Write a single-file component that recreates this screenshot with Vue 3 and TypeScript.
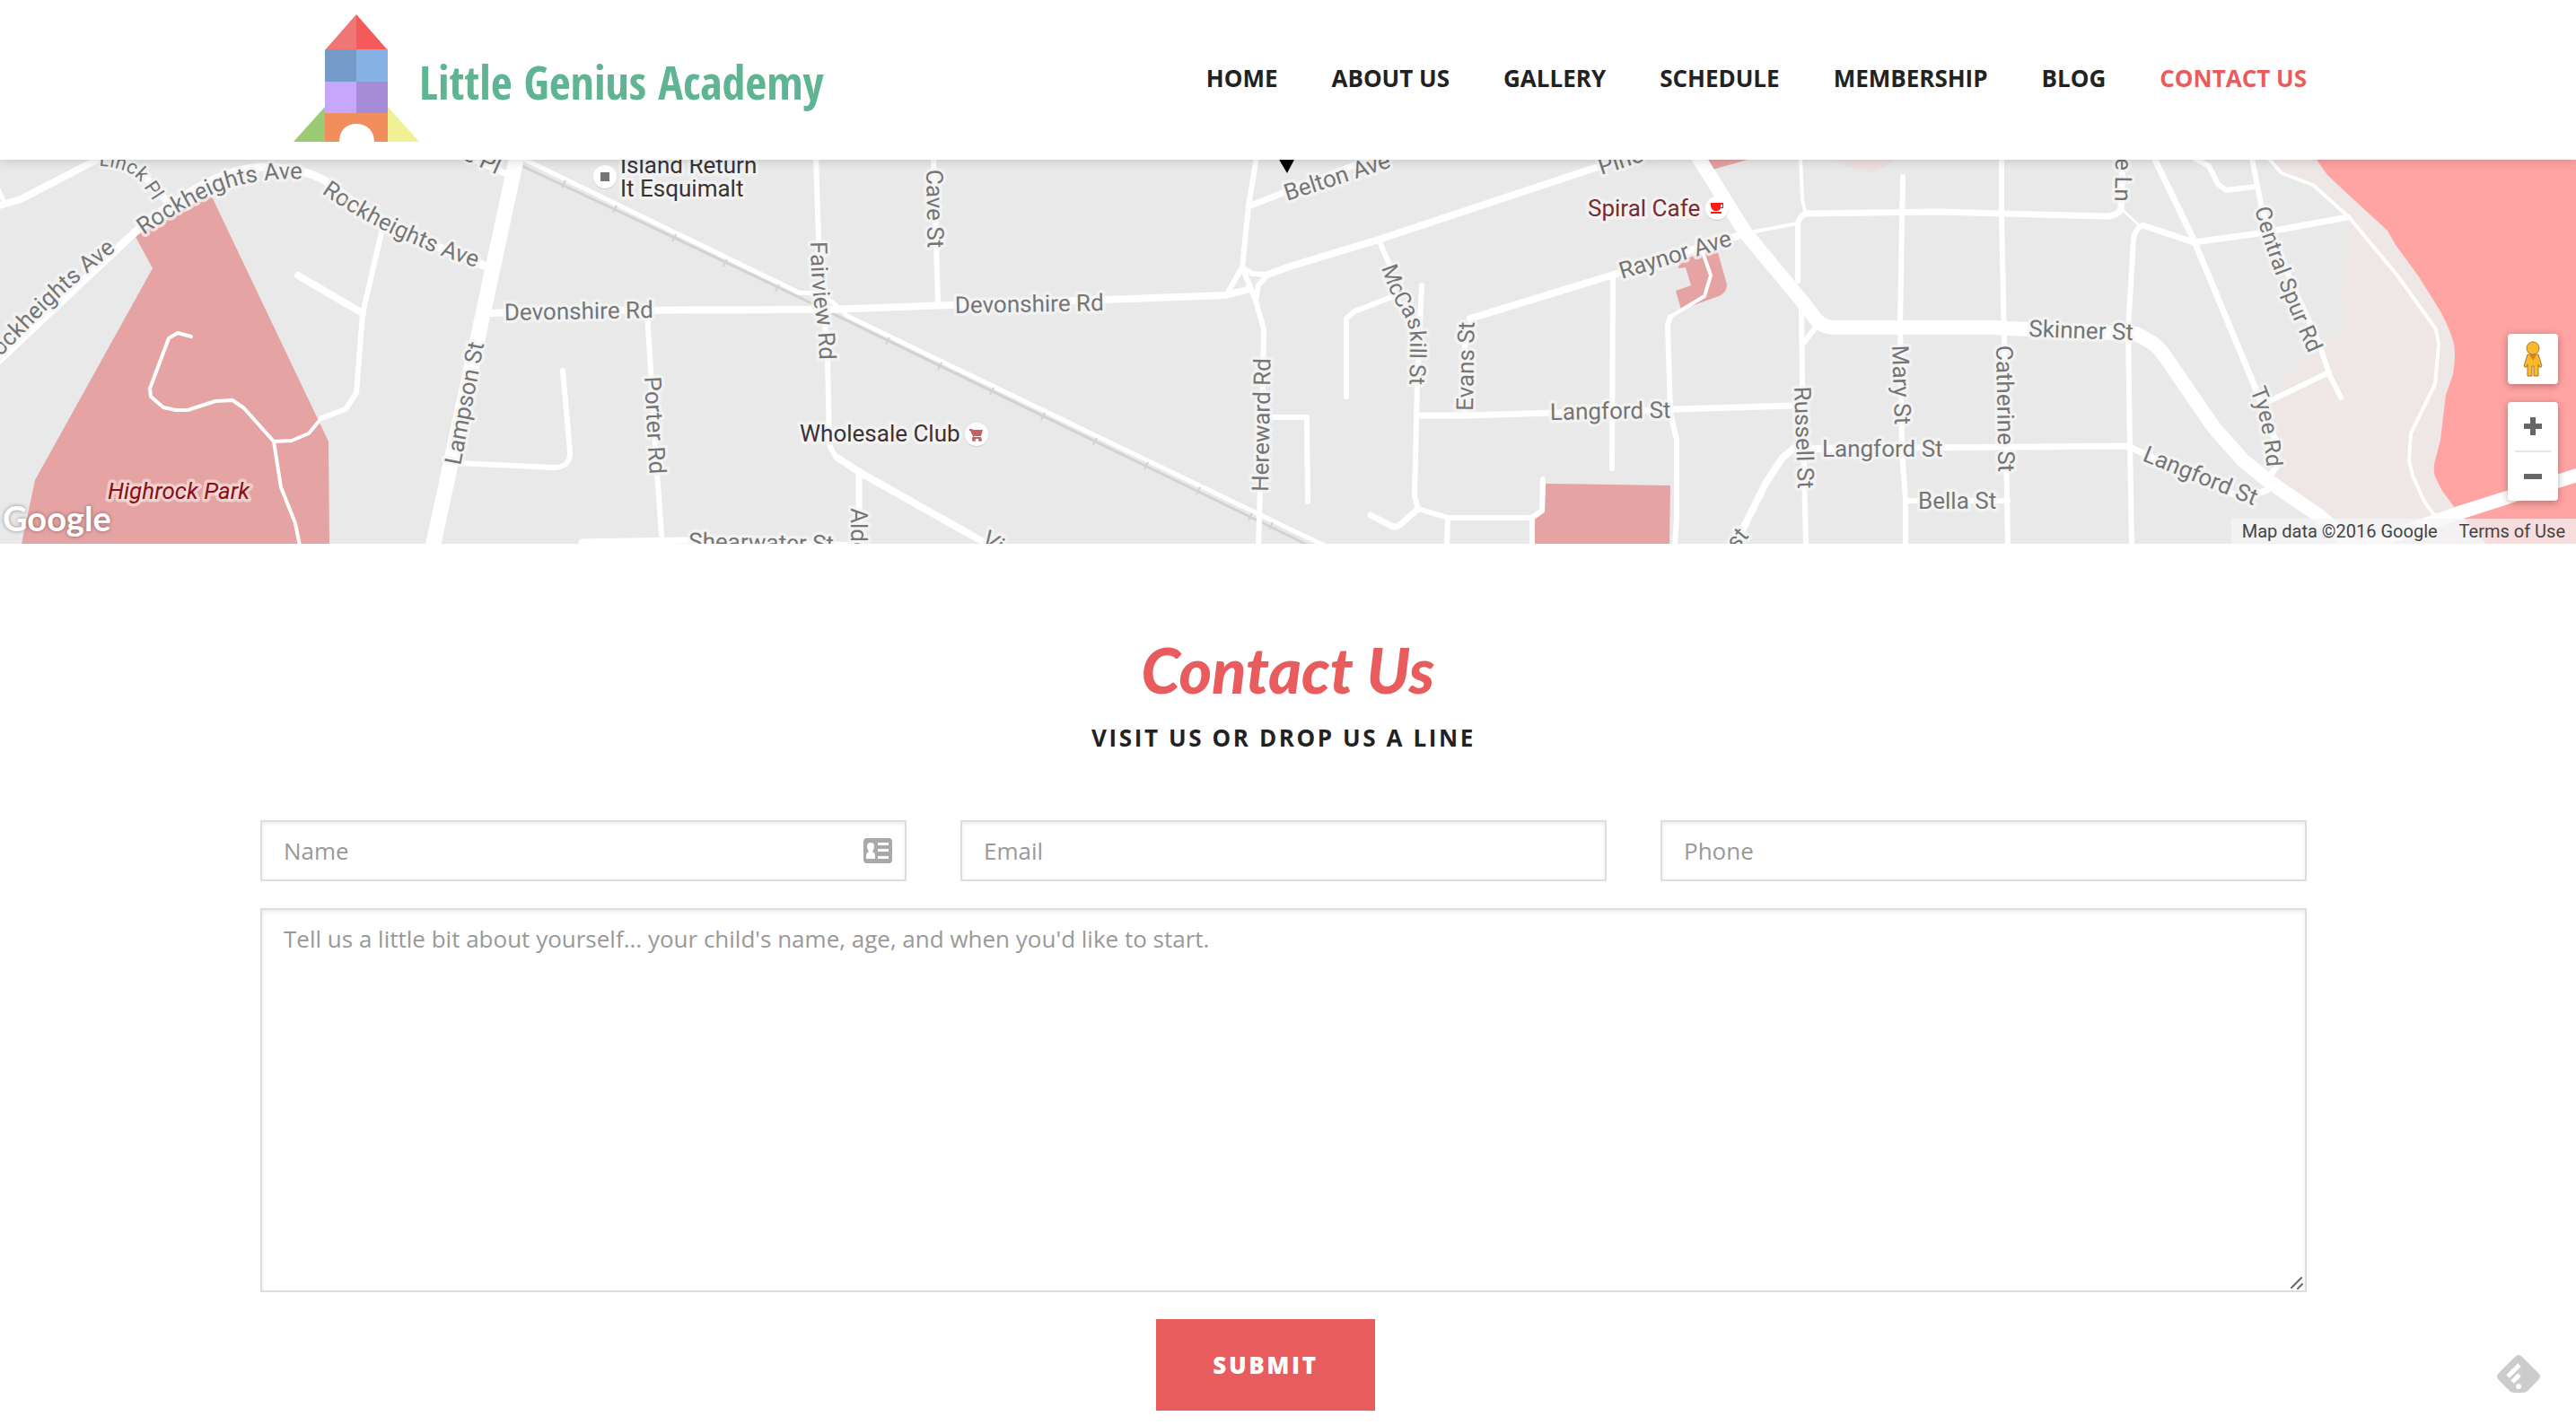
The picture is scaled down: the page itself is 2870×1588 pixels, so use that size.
<script setup lang="ts">
import { ref } from 'vue'

interface NavItem { text: string; active?: boolean }
interface Road { d: string; w: number }
interface Label { text: string; x: number; y: number; r: number; kind?: string }
interface CurvedLabel { id: string; text: string; d: string; kind?: string }

const nav: NavItem[] = [
  { text: 'HOME' },
  { text: 'ABOUT US' },
  { text: 'GALLERY' },
  { text: 'SCHEDULE' },
  { text: 'MEMBERSHIP' },
  { text: 'BLOG' },
  { text: 'CONTACT US', active: true },
]

const parks: string[] = [
  'M150 84 235 39 366 314 367 428H24L39 357 170 121Z',
  'M1722 361 1861 363 1860 428H1709V399L1721 393Z',
  'M1871 112 1913 100 1924 139Q1924 148 1915 152L1873 167 1867 146 1884 140 1878 120 1870 121Z',
  'M1900 0 1908 11 1947 0Z',
]

const roads: Road[] = [
  { w: 8, d: 'M-4 52 23 44 112 -2' },
  { w: 5, d: 'M-4 28 5 48' },
  { w: 9, d: 'M-4 226 150 81Q240 5 300 8 340 10 363 24L427 72 544 120' },
  { w: 8, d: 'M112 -8Q150 0 184 44' },
  { w: 8, d: 'M332 129 404 171' },
  { w: 4, d: 'M213 197 198 193 188 199 167 255 168 264 182 276 196 279 209 279 240 269 259 268 272 277 305 314 325 313 344 305 358 288' },
  { w: 4, d: 'M305 314 313 365 329 405 334 430' },
  { w: 6, d: 'M358 288 385 278 397 260 404 172 427 72' },
  { w: 17, d: 'M576 -4 482 432' },
  { w: 7, d: 'M500 -12 569 18' },
  { w: 8, d: 'M546 171 620 168 900 167 922 167 1366 151 1393 144' },
  { w: 6, d: 'M627 235 635 325Q636 343 617 343L509 338' },
  { w: 7, d: 'M648 426 767 424 960 430' },
  { w: 6, d: 'M721 170 732 349 738 430' },
  { w: 6, d: 'M909 -4 912 89 922 222 924 317Q928 328 933 332L959 349' },
  { w: 8, d: 'M933 332 959 349 1110 434' },
  { w: 6, d: 'M1040 -4 1045 159' },
  { w: 7, d: 'M957 349V432' },
  { w: 6, d: 'M1400 -4 1391 52 1384 120 1399 157 1408 189 1406 300 1402 432' },
  { w: 7, d: 'M1391 52 1550 -10' },
  { w: 6, d: 'M1384 120 1366 151 M1384 120 1395 127 1412 128 1402 140 1399 157' },
  { w: 8, d: 'M1412 128 1440 118 1536 89 1780 8 1830 -10' },
  { w: 6, d: 'M1406 287H1456L1457 381' },
  { w: 6, d: 'M1536 89 1548 117 1553 150 1571 180 1580 200' },
  { w: 6, d: 'M1584 140 1579 250 1576 375 1580 389 1613 399H1707L1718 391 1719 356' },
  { w: 7, d: 'M1580 389 1562 405Q1556 411 1550 408L1527 396' },
  { w: 6, d: 'M1613 399 1612 430M1707 399V430' },
  { w: 6, d: 'M1553 152 1509 169 1500 177V264' },
  { w: 6, d: 'M1632 284V200L1640 176' },
  { w: 8, d: 'M1638 177 1798 128 1880 102 1945 82' },
  { w: 7, d: 'M1580 285H1633L1867 278 1998 274' },
  { w: 6, d: 'M1797 128 1796 344' },
  { w: 4, d: 'M1897 103 1906 129 1899 152 1861 175' },
  { w: 6, d: 'M1861 175 1858 184 1861 282 1868 312V399L1866 430' },
  { w: 16, d: 'M1890 -6 1945 82 2009 159 2024 179Q2032 187 2045 187H2220L2260 189 2380 194 2398 204Q2408 212 2414 222L2467 299 2499 335 2526 357 2584 397 2624 432' },
  { w: 4, d: 'M1950 81 2002 71' },
  { w: 4, d: 'M2006 -2 2008 44 2011 57' },
  { w: 6, d: 'M2003 135V74Q2004 61 2014 60' },
  { w: 7, d: 'M2012 60 2160 58 2230 60 2347 63Q2360 62 2363 55L2365 -2' },
  { w: 6, d: 'M2007 165 2008 252 2012 430' },
  { w: 6, d: 'M2028 180 2009 205' },
  { w: 6, d: 'M2120 19 2117 179 2119 325 2123 379V430' },
  { w: 8, d: 'M2130 321 2010 322 1998 322 1986 332 1968 359 1940 415 1935 430' },
  { w: 7, d: 'M2010 322 2370 319 2500 378 2526 368' },
  { w: 6, d: 'M2123 380H2237' },
  { w: 6, d: 'M2230 -2 2230 59 2233 205 2237 430' },
  { w: 3, d: 'M2364 55 2384 74' },
  { w: 6, d: 'M2387 73Q2378 78 2377 89L2371 189 2373 319 2375 430' },
  { w: 7, d: 'M2387 73 2444 92 2517 82 2616 64' },
  { w: 7, d: 'M2400 -2 2444 89 2513 255 2534 310 2536 342 2526 357' },
  { w: 6, d: 'M2509 -2 2520 55 2550 130 2584 205 2595 239 2608 265' },
  { w: 6, d: 'M2595 237 2526 270' },
  { w: 6, d: 'M2446 -1 2461 7 2471 27 2480 34 2513 30' },
  { w: 4, d: 'M2528 -1 2542 15 2577 28 2617 64 2671 129 2714 189 2717 205 2713 250 2686 305 2684 335 2688 352 2701 381 2715 400' },
  { w: 15, d: 'M2876 350 2738 394 2628 432' },
  { w: 5, d: 'M585 0 890 148 911 149 929 160 944 174 1440 413 1476 430' },
]

const railTicks: [number, number][] = [
  [628, 27], [685, 55], [751, 87], [808, 115], [866, 143], [989, 202], [1047, 230], [1105, 258],
  [1162, 286], [1220, 314], [1277, 341], [1335, 369], [1393, 398], [1416, 408],
]

const labels: Label[] = [
  { text: 'e Pl', x: 514, y: -1, r: 24 },
  { text: 'Lampson St', x: 513, y: 341, r: -79 },
  { text: 'Devonshire Rd', x: 562, y: 179, r: -1 },
  { text: 'Devonshire Rd', x: 1064, y: 171, r: -1 },
  { text: 'Porter Rd', x: 718, y: 242, r: 87 },
  { text: 'Cave St', x: 1032, y: 11, r: 89 },
  { text: 'Shearwater St', x: 767, y: 434, r: 1 },
  { text: 'Alder St', x: 948, y: 388, r: 90 },
  { text: 'Vi', x: 1092, y: 427, r: 33 },
  { text: 'Hereward Rd', x: 1413, y: 370, r: -89 },
  { text: 'Belton Ave', x: 1434, y: 46, r: -18 },
  { text: 'Pine St', x: 1784, y: 17, r: -18 },
  { text: 'Raynor Ave', x: 1807, y: 133, r: -17 },
  { text: 'Evans St', x: 1641, y: 280, r: -89 },
  { text: 'Langford St', x: 1727, y: 290, r: -1 },
  { text: 'Russell St', x: 1999, y: 253, r: 88 },
  { text: 'Mary St', x: 2108, y: 207, r: 88 },
  { text: 'Langford St', x: 2030, y: 331, r: 0 },
  { text: 'Bella St', x: 2137, y: 389, r: 0 },
  { text: 'Catherine St', x: 2224, y: 207, r: 89 },
  { text: 'Skinner St', x: 2260, y: 197, r: 2 },
  { text: 'Langford St', x: 2386, y: 335, r: 22 },
  { text: 'e Ln', x: 2357, y: -2, r: 91 },
  { text: 'st', x: 1935, y: 436, r: -50 },
  { text: 'Island Return', x: 691, y: 15, r: 0, kind: 'place' },
  { text: 'It Esquimalt', x: 691, y: 41, r: 0, kind: 'place' },
  { text: 'Wholesale Club', x: 891, y: 314, r: 0, kind: 'place' },
  { text: 'Spiral Cafe', x: 1769, y: 63, r: 0, kind: 'food' },
  { text: 'Highrock Park', x: 120, y: 378, r: 0, kind: 'park' },
]

const curved: CurvedLabel[] = [
  { id: 'rock-west', text: 'Rockheights Ave', d: 'M-11 231 L26 194 Q58 160 92 131 L145 88' },
  { id: 'rock-mid', text: 'Rockheights Ave', d: 'M160 84 Q200 56 240 37 Q285 18 350 22' },
  { id: 'rock-east', text: 'Rockheights Ave', d: 'M358 37 Q440 95 560 129' },
  { id: 'linck', text: 'Linck Pl', d: 'M110 7 Q142 8 156 24 L184 66', kind: 'tight' },
  { id: 'fairview', text: 'Fairview Rd', d: 'M903 91 Q904 150 910 180 Q913 200 913 240' },
  { id: 'mccaskill', text: 'McCaskill St', d: 'M1539 120 Q1550 155 1562 170 Q1572 185 1571 205 L1570 280', kind: 'small' },
  { id: 'tyee', text: 'Tyee Rd', d: 'M2507 257 Q2525 300 2526 360', kind: 'small' },
  { id: 'spur', text: 'Central Spur Rd', d: 'M2512 55 Q2528 118 2574 220', kind: 'small' },
]

const name = ref('')
const email = ref('')
const phone = ref('')
const message = ref('')
</script>

<template>
  <div class="page">
    <header class="header">
      <div class="container header-row">
        <a href="#" class="brand">
          <svg class="rocket" width="140" height="143" viewBox="0 0 140 143" aria-hidden="true">
            <path d="M70 0 35 40H70Z" fill="#f07575" />
            <path d="M70 0 105 40H70Z" fill="#f55a5a" />
            <path d="M35 39H70V75H35Z" fill="#759bc8" />
            <path d="M70 39H105V75H70Z" fill="#87b2e5" />
            <path d="M35 75H70V111H35Z" fill="#c6a7fc" />
            <path d="M70 75H105V111H70Z" fill="#a68bd6" />
            <path d="M35 103V142H0Z" fill="#9ccb76" />
            <path d="M105 103V142H140Z" fill="#f0f094" />
            <path d="M35 110H105V142H90C90 130 82 122 70 122S51 130 51 142H35Z" fill="#f28e5c" />
          </svg>
          <span class="brand-name">Little Genius Academy</span>
        </a>
        <nav class="nav">
          <a v-for="item in nav" :key="item.text" href="#" :class="{ active: item.active }">{{ item.text }}</a>
        </nav>
      </div>
    </header>

    <section class="map" aria-label="Map">
      <svg class="map-canvas" viewBox="0 0 2870 428" preserveAspectRatio="xMidYMid slice">
        <rect width="2870" height="428" fill="#e9e9e9" />
        <path
          d="M2529 0 2542 15 2577 28 2616 67 2609 155 2613 165Q2612 182 2609 189L2591 202 2549 242 2524 275 2533 342 2526 357 2584 397 2628 428H2800V0Z"
          fill="#efe6e6" />
        <path d="M2041 0 2062 8 2085 14 2100 8 2110 0Z" fill="#eee0e0" />
        <path
          d="M2581 0 2593 17 2623 45 2660 79 2669 95 2694 129 2719 169Q2730 190 2733 202 2737 215 2733 239L2725 262 2719 312 2712 339Q2711 350 2714 355L2721 369 2738 392 2770 428H2870V0Z"
          fill="#ffa3a3" />
        <path v-for="d in parks" :key="d" :d="d" fill="#e5a3a3" />

        <path d="M569 1 720 72 900 158 1440 421 1462 432" fill="none" stroke="#d2d2d2" stroke-width="3" />
        <g fill="none" stroke="#fff" stroke-linecap="round" stroke-linejoin="round">
          <path v-for="road in roads" :key="road.d" :d="road.d" :stroke-width="road.w" />
        </g>
        <g stroke="#d2d2d2" stroke-width="2">
          <line v-for="[x, y] in railTicks" :key="x" :x1="x - 2" :y1="y + 4" :x2="x + 2" :y2="y - 4" />
        </g>

        <defs>
          <path v-for="c in curved" :id="c.id" :key="c.id" :d="c.d" />
        </defs>
        <g class="labels">
          <text
            v-for="(l, i) in labels" :key="i" :class="l.kind"
            :transform="`translate(${l.x} ${l.y}) rotate(${l.r})`">{{ l.text }}</text>
          <text v-for="c in curved" :key="c.id" :class="c.kind"><textPath :href="`#${c.id}`">{{ c.text }}</textPath></text>
        </g>

        <g transform="translate(674 19)">
          <circle cy="1" r="13" fill="#ccc" />
          <circle r="13" fill="#fff" />
          <path d="M-5-5H5V5H-5Z" fill="#757575" />
        </g>
        <g transform="translate(1088 306)">
          <circle cy="1" r="13" fill="#ccc" />
          <circle r="13" fill="#fff" />
          <path d="M-8-6H-5L-4-5H7L5 2H-3L-3 3H5V5H-5L-4 2-7-4H-8Z" fill="#c66161" />
          <circle cx="-3" cy="6" r="2" fill="#c66161" />
          <circle cx="4" cy="6" r="2" fill="#c66161" />
        </g>
        <g transform="translate(1913 54)">
          <circle cy="1" r="13" fill="#ccc" />
          <circle r="13" fill="#fff" />
          <path d="M-7-6H7V0H4Q3 3 0 3H-3Q-6 2-7-2ZM4-4V-1H6V-4ZM-7 4H5V6H-7Z" fill="#f91d1d" fill-rule="evenodd" />
        </g>
        <path d="M1424-2H1443L1434 15Z" fill="#000" />
      </svg>

      <span class="google">Google</span>
      <div class="map-legal">
        <span>Map data ©2016 Google</span>
        <a href="#">Terms of Use</a>
      </div>
      <div class="map-controls">
        <button type="button" class="control pegman" aria-label="Street View">
          <svg width="24" height="40" viewBox="0 0 24 40" stroke="#a07a2c" stroke-width="1">
            <path d="M6 15H18L22 28Q21 30 19 29L18 26V39H13V28H11V39H6V26L5 29Q3 30 2 28Z" fill="#fbb829" />
            <path d="M8 15H16L12 22Z" fill="#e08016" stroke="none" />
            <circle cx="12" cy="8" r="7" fill="#fbb829" />
          </svg>
        </button>
        <div class="control zoom">
          <button type="button" aria-label="Zoom in">
            <svg width="20" height="20" viewBox="0 0 20 20"><path d="M7 0H13V7H20V13H13V20H7V13H0V7H7Z" fill="#666" /></svg>
          </button>
          <button type="button" aria-label="Zoom out">
            <svg width="20" height="20" viewBox="0 0 20 20"><path d="M0 7H20V13H0Z" fill="#666" /></svg>
          </button>
        </div>
      </div>
    </section>

    <main class="container contact">
      <h1>Contact Us</h1>
      <p class="subtitle">VISIT US OR DROP US A LINE</p>
      <form class="form" @submit.prevent>
        <div class="fields">
          <div class="field">
            <input v-model="name" type="text" placeholder="Name" aria-label="Name">
            <svg class="card-icon" width="32" height="28" viewBox="0 0 32 28" aria-hidden="true">
              <rect width="32" height="28" rx="4" fill="#a9a9a9" />
              <path d="M3 23V20Q3 16 6 15 4 12 4 9 4 5 8 5T12 9Q12 12 10 15 13 16 13 20V23Z" fill="#fff" />
              <path d="M16 5H28V8H16ZM16 12H28V15H16ZM16 20H28V23H16Z" fill="#fff" />
            </svg>
          </div>
          <div class="field">
            <input v-model="email" type="email" placeholder="Email" aria-label="Email">
          </div>
          <div class="field">
            <input v-model="phone" type="tel" placeholder="Phone" aria-label="Phone">
          </div>
        </div>
        <div class="field">
          <textarea
            v-model="message" aria-label="Message"
            placeholder="Tell us a little bit about yourself... your child's name, age, and when you'd like to start."></textarea>
          <svg class="grip" width="16" height="16" viewBox="0 0 16 16" aria-hidden="true">
            <path d="M2 14 13 3M9 15 14 10" stroke="#666" stroke-width="2" stroke-linecap="round" />
          </svg>
        </div>
        <button type="submit" class="submit">SUBMIT</button>
      </form>
    </main>

    <button type="button" class="feed" aria-label="Follow feed">
      <svg width="48" height="42" viewBox="0 0 48 42">
        <path d="M20 2Q24-2 28 2L46 20Q50 24 46 28L34 40Q32 42 29 42H19Q16 42 14 40L2 28Q-2 24 2 20Z" fill="#ccc" />
        <path d="M12 24 25 11M17 30 25 22" stroke="#fff" stroke-width="5" />
        <circle cx="24" cy="35" r="3" fill="#fff" />
      </svg>
    </button>
  </div>
</template>

<style>
body {
  margin: 0;
  background: #fff;
}
</style>

<style scoped>
.page {
  font-family: "Open Sans", "Noto Sans", sans-serif;
  font-size: 26px;
  color: #222;
}

a {
  color: inherit;
  text-decoration: none;
}

button {
  border: 0;
  padding: 0;
  cursor: pointer;
}

.container {
  box-sizing: border-box;
  width: calc(100% - 10px);
  padding: 0 calc((100% - 2290px) / 2);
}

.header {
  position: relative;
  z-index: 1;
  padding-bottom: 4px;
  background: #fff;
  box-shadow: 0 0 12px rgba(0, 0, 0, 0.2);
}

.header-row {
  display: flex;
  align-items: center;
  justify-content: space-between;
  min-height: 174px;
}

.brand {
  display: flex;
  align-items: center;
  margin-left: 37px;
}

.rocket {
  display: block;
}

.brand-name {
  padding-top: 8px;
  font: 700 52px/64px "Open Sans Condensed", "Open Sans", sans-serif;
  color: #5fb593;
}

.nav {
  display: flex;
  gap: 60px;
  font-weight: 700;
  line-height: 36px;
}

.nav .active {
  color: #e85c5e;
}

.map {
  position: relative;
  height: 428px;
  overflow: hidden;
  font-family: Roboto, sans-serif;
}

.map-canvas {
  display: block;
  width: 100%;
  height: 100%;
}

.labels text {
  font-size: 26px;
  fill: #757575;
  stroke: rgba(245, 245, 245, 0.75);
  stroke-width: 7px;
  stroke-linejoin: round;
  paint-order: stroke;
}

.labels .small {
  font-size: 25px;
}

.labels .tight {
  font-size: 22px;
}

.labels .place {
  fill: #3c3234;
}

.labels .food {
  fill: #7b2a2d;
}

.labels .park {
  fill: #8c0f12;
  font-style: italic;
  stroke: rgba(245, 235, 235, 0.6);
}

.google {
  position: absolute;
  left: 3px;
  bottom: 6px;
  font: 700 38px/46px Lato, sans-serif;
  color: #fff;
  text-shadow: 0 0 4px rgba(0, 0, 0, 0.4);
}

.map-legal {
  position: absolute;
  right: 0;
  bottom: 0;
  display: flex;
  gap: 24px;
  padding: 0 12px;
  background: rgba(245, 245, 245, 0.7);
  font-size: 20px;
  line-height: 28px;
  color: #444;
}

.map-controls {
  position: absolute;
  top: 194px;
  right: 20px;
  display: grid;
  gap: 20px;
}

.control {
  width: 56px;
  border-radius: 4px;
  background: #fff;
  box-shadow: 0 2px 8px rgba(0, 0, 0, 0.3);
}

.pegman {
  display: grid;
  place-items: center;
  height: 56px;
}

.zoom {
  display: grid;
  padding: 0 8px;
  box-sizing: border-box;
}

.zoom button {
  display: grid;
  place-items: center;
  height: 54px;
  background: none;
}

.zoom button + button {
  height: 56px;
  border-top: 2px solid #e6e6e6;
}

.contact {
  padding-top: 100px;
  padding-bottom: 16px;
  text-align: center;
}

h1 {
  margin: 0 0 16px;
  padding-left: 10px;
  font: italic 900 70px/80px Lato, sans-serif;
  color: #e85c5e;
}

.subtitle {
  margin: 0 0 72px;
  font-weight: 700;
  line-height: 40px;
  letter-spacing: 0.1em;
}

.form {
  display: grid;
  gap: 30px;
}

.fields {
  display: grid;
  grid-template-columns: repeat(3, 1fr);
  gap: 60px;
}

.field {
  position: relative;
  display: grid;
}

input,
textarea {
  box-sizing: border-box;
  width: 100%;
  border: 2px solid #ddd;
  border-radius: 0;
  padding: 12px 24px;
  background: #fff;
  box-shadow: inset 0 2px 4px rgba(0, 0, 0, 0.08);
  font: 26px/40px "Open Sans", "Noto Sans", sans-serif;
  color: #555;
}

input {
  height: 68px;
}

textarea {
  height: 428px;
  resize: none;
}

input::placeholder,
textarea::placeholder {
  color: #999;
  opacity: 1;
}

.card-icon {
  position: absolute;
  top: 20px;
  right: 16px;
}

.grip {
  position: absolute;
  right: 3px;
  bottom: 3px;
}

.submit {
  justify-self: center;
  margin-right: 40px;
  padding: 0 63px;
  background: #e85c5e;
  font: 800 26px/102px "Open Sans", "Noto Sans", sans-serif;
  letter-spacing: 0.1em;
  color: #fff;
}

.feed {
  position: fixed;
  right: 40px;
  bottom: 36px;
  background: none;
}

.feed svg {
  display: block;
}
</style>
